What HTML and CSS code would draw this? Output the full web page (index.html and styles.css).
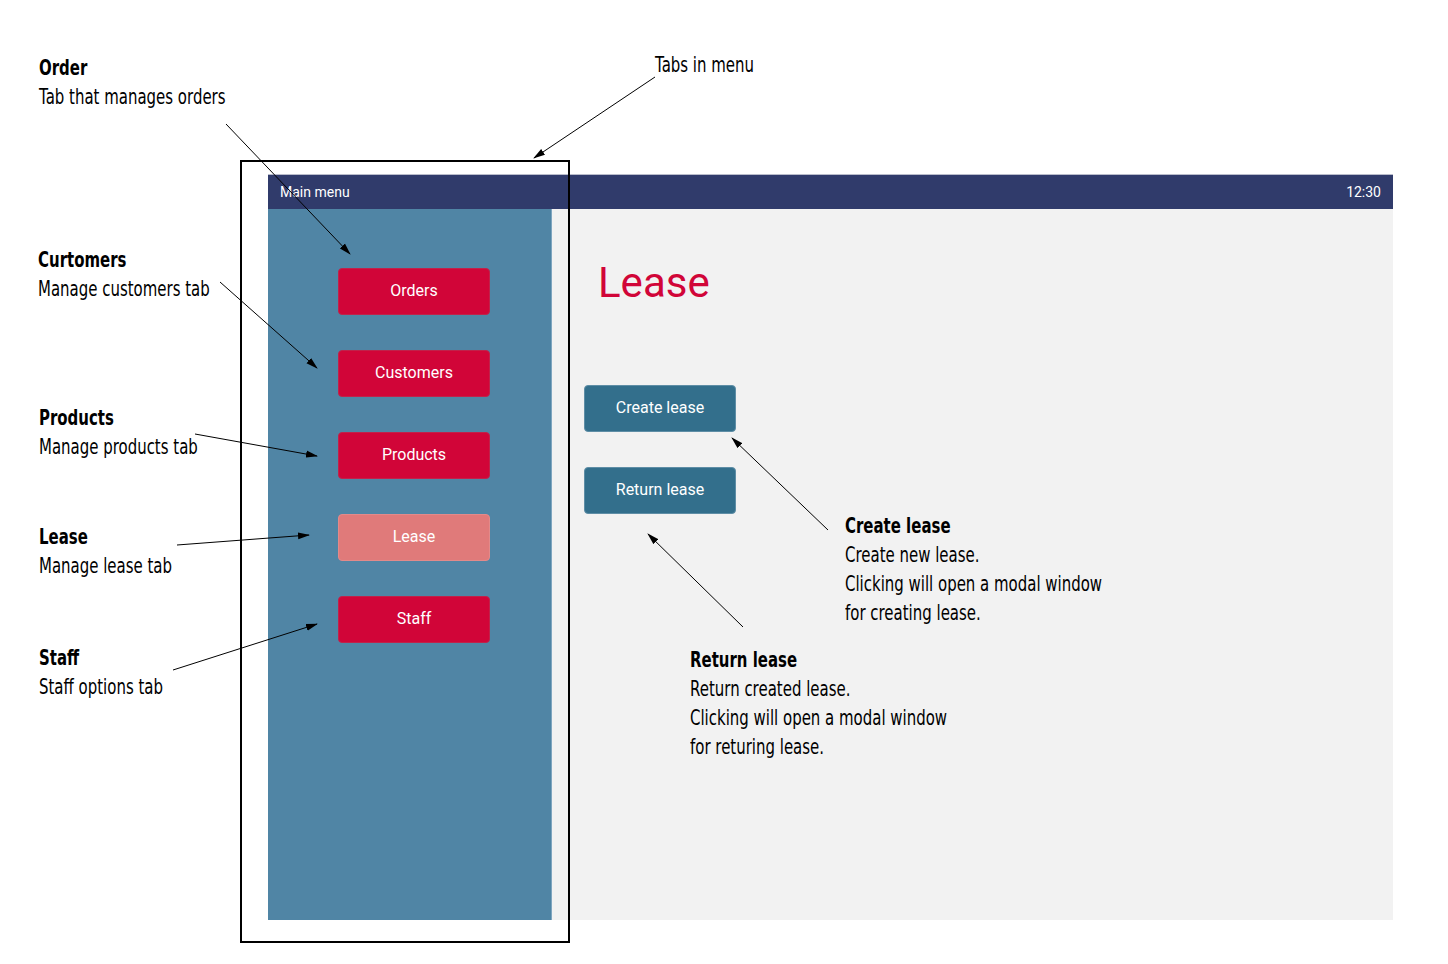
FILE: index.html
```html
<!DOCTYPE html>
<html lang="en">
  <head>
    <meta charset="UTF-8" />
    <meta name="viewport" content="width=device-width, initial-scale=1.0" />
    <title>Lease - Main menu</title>
    <link rel="stylesheet" href="styles.css">
  </head>
  <body>
    <div class="page">
      <div class="app">
        <header class="app-header">
          <span>Main menu</span>
          <span>12:30</span>
        </header>

        <nav class="sidebar">
          <button type="button" class="tab">Orders</button>
          <button type="button" class="tab">Customers</button>
          <button type="button" class="tab">Products</button>
          <button type="button" class="tab tab-active">Lease</button>
          <button type="button" class="tab">Staff</button>
        </nav>

        <main class="content">
          <h1 class="content-title">Lease</h1>
          <div class="actions">
            <button type="button" class="btn-action">Create lease</button>
            <button type="button" class="btn-action">Return lease</button>
          </div>
        </main>
      </div>

      <!-- annotations over the wireframe -->
      <div class="menu-frame"></div>

      <div class="note note-order">
        <strong>Order</strong>
        <p>Tab that manages orders</p>
      </div>
      <div class="note note-tabs">
        <p>Tabs in menu</p>
      </div>
      <div class="note note-customers">
        <strong>Curtomers</strong>
        <p>Manage customers tab</p>
      </div>
      <div class="note note-products">
        <strong>Products</strong>
        <p>Manage products tab</p>
      </div>
      <div class="note note-lease">
        <strong>Lease</strong>
        <p>Manage lease tab</p>
      </div>
      <div class="note note-staff">
        <strong>Staff</strong>
        <p>Staff options tab</p>
      </div>
      <div class="note note-create">
        <strong>Create lease</strong>
        <p>Create new lease.</p>
        <p>Clicking will open a modal window</p>
        <p>for creating lease.</p>
      </div>
      <div class="note note-return">
        <strong>Return lease</strong>
        <p>Return created lease.</p>
        <p>Clicking will open a modal window</p>
        <p>for returing lease.</p>
      </div>

      <svg class="arrows" width="1448" height="964" viewBox="0 0 1448 964">
        <defs>
          <marker id="head" markerWidth="12" markerHeight="8" refX="11" refY="4" orient="auto" markerUnits="userSpaceOnUse">
            <path d="M0,0.5 L12,4 L0,7.5 Z" fill="#000" />
          </marker>
        </defs>
        <g stroke="#000" stroke-width="1" marker-end="url(#head)">
          <line x1="226" y1="124" x2="350" y2="254" />
          <line x1="655" y1="77" x2="534" y2="158" />
          <line x1="220" y1="282" x2="317" y2="368" />
          <line x1="195" y1="434" x2="317" y2="456" />
          <line x1="177" y1="545" x2="309" y2="535" />
          <line x1="173" y1="670" x2="317" y2="624" />
          <line x1="828" y1="530" x2="732" y2="438" />
          <line x1="743" y1="627" x2="648" y2="534" />
        </g>
      </svg>
    </div>
  </body>
</html>
```

FILE: styles.css
```css
* {
  margin: 0;
  padding: 0;
  box-sizing: border-box;
}

body {
  background-color: #fff;
  font-family: Roboto, "Liberation Sans", sans-serif;
}

.page {
  position: relative;
  width: 1448px;
  height: 964px;
  padding: 174px 0 0 268px;
}

/* app wireframe */
.app {
  width: 1125px;
  height: 746px;
  display: grid;
  grid-template-columns: 284px 1fr;
  grid-template-rows: 35px 1fr;
}

.app-header {
  grid-column: 1 / 3;
  display: flex;
  justify-content: space-between;
  align-items: center;
  padding: 0 12px;
  background-color: #303b6b;
  border-top: 1px solid #b9bccb;
  color: #fff;
  font-size: 14px;
}

.sidebar {
  background-color: #5085a5;
  border-right: 1px solid #7fa6c0;
  display: flex;
  flex-direction: column;
  gap: 35px;
  padding: 59px 0 0 70px;
}

.tab {
  width: 152px;
  height: 47px;
  padding-bottom: 2px;
  border: 1px solid #c0224a;
  border-radius: 4px;
  background-color: #d10538;
  color: #fff;
  font-family: Roboto, "Liberation Sans", sans-serif;
  font-size: 16px;
  font-weight: 400;
}

.tab-active {
  background-color: #e07a7a;
  border-color: #e38a8a;
}

.content {
  background-color: #f2f2f2;
  padding: 0 0 0 32px;
}

.content-title {
  margin: 48px 0 0 14px;
  font-size: 42px;
  font-weight: 400;
  line-height: 52px;
  color: #d10538;
}

.actions {
  display: flex;
  flex-direction: column;
  gap: 35px;
  margin-top: 76px;
}

.btn-action {
  width: 152px;
  height: 47px;
  padding-bottom: 2px;
  border: 1px solid #5f8ea6;
  border-radius: 4px;
  background-color: #336f8c;
  color: #fff;
  font-family: Roboto, "Liberation Sans", sans-serif;
  font-size: 16px;
  font-weight: 400;
}

/* annotations */
.menu-frame {
  position: absolute;
  left: 240px;
  top: 160px;
  width: 330px;
  height: 783px;
  border: 2px solid #000;
}

.note {
  position: absolute;
  font-family: "DejaVu Sans", sans-serif;
  font-size: 22px;
  line-height: 29px;
  color: #000;
  white-space: nowrap;
  transform: scaleX(0.68);
  transform-origin: left top;
}

.note strong {
  display: block;
  font-weight: 700;
}

.note-order { left: 39px; top: 53px; }
.note-tabs { left: 655px; top: 50px; }
.note-customers { left: 38px; top: 245px; }
.note-products { left: 39px; top: 403px; }
.note-lease { left: 39px; top: 522px; }
.note-staff { left: 39px; top: 643px; }
.note-create { left: 845px; top: 511px; }
.note-return { left: 690px; top: 645px; }

.arrows {
  position: absolute;
  left: 0;
  top: 0;
  pointer-events: none;
}
```
